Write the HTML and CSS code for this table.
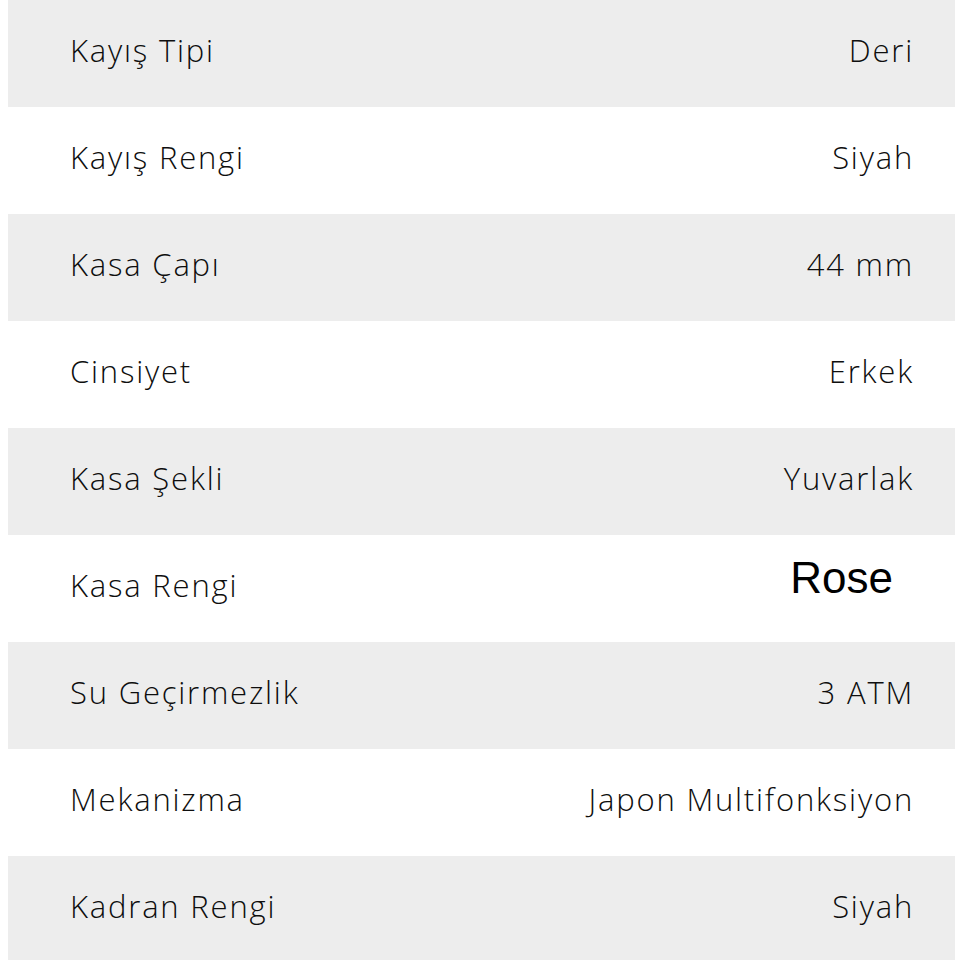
FILE: index.html
```html
<!DOCTYPE html>
<html lang="tr">
<head>
<meta charset="utf-8">
<link rel="stylesheet" href="styles.css">
</head>
<body>
<div class="specs">
  <div class="row alt"><span class="label">Kayış Tipi</span><span class="value">Deri</span></div>
  <div class="row"><span class="label">Kayış Rengi</span><span class="value">Siyah</span></div>
  <div class="row alt"><span class="label">Kasa Çapı</span><span class="value">44 mm</span></div>
  <div class="row"><span class="label">Cinsiyet</span><span class="value">Erkek</span></div>
  <div class="row alt"><span class="label">Kasa Şekli</span><span class="value">Yuvarlak</span></div>
  <div class="row"><span class="label">Kasa Rengi</span><span class="value rose">Rose</span></div>
  <div class="row alt"><span class="label">Su Geçirmezlik</span><span class="value">3 ATM</span></div>
  <div class="row"><span class="label">Mekanizma</span><span class="value">Japon Multifonksiyon</span></div>
  <div class="row alt"><span class="label">Kadran Rengi</span><span class="value">Siyah</span></div>
</div>
</body>
</html>
```

FILE: styles.css
```css
html, body {
  margin: 0;
  padding: 0;
  background: #ffffff;
}
.specs {
  margin-left: 8px;
  display: flex;
  flex-direction: column;
}
.row {
  height: 107px;
  display: flex;
  align-items: center;
  justify-content: space-between;
  padding: 0 43px 0 62px;
  font-family: "Open Sans", "Liberation Sans", sans-serif;
  font-weight: 300;
  font-size: 31px;
  letter-spacing: 1.8px;
  color: #0e0e0e;
  box-sizing: border-box;
}
.row.alt {
  background: #ededed;
}
.label, .value {
  line-height: 1;
  padding-bottom: 6px;
}
.value {
  margin-right: -2px;
}
.value.rose {
  font-family: "Liberation Sans", Arial, sans-serif;
  font-weight: 400;
  font-size: 44px;
  letter-spacing: 0;
  color: #000;
  margin-right: 19px;
  padding-bottom: 22px;
}
```
